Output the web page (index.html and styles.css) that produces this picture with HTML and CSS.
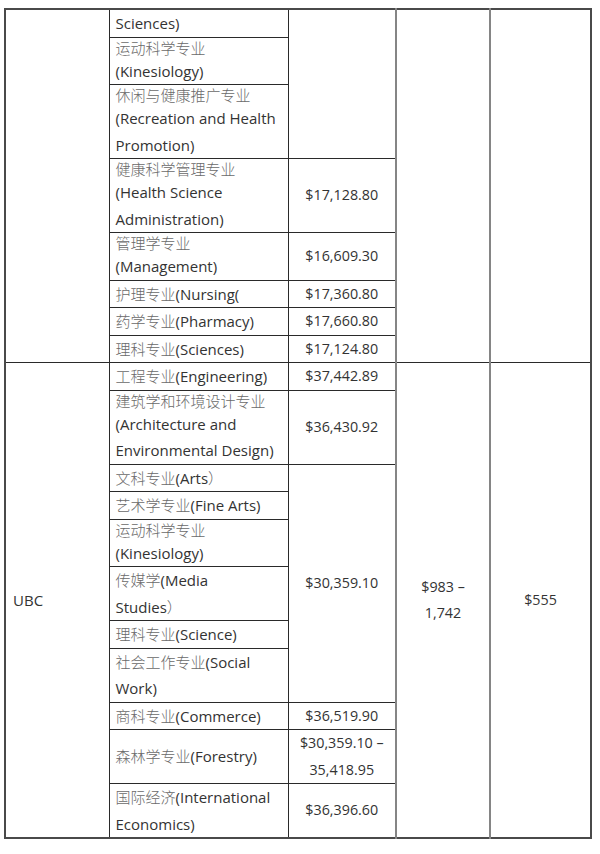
FILE: index.html
```html
<!DOCTYPE html>
<html lang="zh-CN">
<head>
<meta charset="utf-8">
<title>学费表</title>
<link rel="stylesheet" href="styles.css">
</head>
<body>
<table class="fees">
  <colgroup>
    <col class="c-school">
    <col class="c-major">
    <col class="c-tuition">
    <col class="c-fee">
    <col class="c-other">
  </colgroup>
  <tbody>
    <tr>
      <td class="school" rowspan="8"></td>
      <td class="major">Sciences)</td>
      <td class="num" rowspan="3"></td>
      <td class="num gray" rowspan="8"></td>
      <td class="num gray" rowspan="8"></td>
    </tr>
    <tr><td class="major"><span class="zh line">运动科学专业</span>(Kinesiology)</td></tr>
    <tr><td class="major"><span class="zh line">休闲与健康推广专业</span>(Recreation and Health<br>Promotion)</td></tr>
    <tr>
      <td class="major"><span class="zh line">健康科学管理专业</span>(Health Science<br>Administration)</td>
      <td class="num">$17,128.80</td>
    </tr>
    <tr>
      <td class="major"><span class="zh line">管理学专业</span>(Management)</td>
      <td class="num">$16,609.30</td>
    </tr>
    <tr>
      <td class="major"><span class="zh">护理专业</span>(Nursing(</td>
      <td class="num">$17,360.80</td>
    </tr>
    <tr>
      <td class="major"><span class="zh">药学专业</span>(Pharmacy)</td>
      <td class="num">$17,660.80</td>
    </tr>
    <tr>
      <td class="major"><span class="zh">理科专业</span>(Sciences)</td>
      <td class="num">$17,124.80</td>
    </tr>

    <tr>
      <td class="school" rowspan="11">UBC</td>
      <td class="major"><span class="zh">工程专业</span>(Engineering)</td>
      <td class="num">$37,442.89</td>
      <td class="num gray" rowspan="11">$983 –<br>1,742</td>
      <td class="num gray" rowspan="11">$555</td>
    </tr>
    <tr>
      <td class="major"><span class="zh line">建筑学和环境设计专业</span>(Architecture and<br>Environmental Design)</td>
      <td class="num">$36,430.92</td>
    </tr>
    <tr>
      <td class="major"><span class="zh">文科专业</span>(Arts<span class="zh">）</span></td>
      <td class="num" rowspan="6">$30,359.10</td>
    </tr>
    <tr><td class="major"><span class="zh">艺术学专业</span>(Fine Arts)</td></tr>
    <tr><td class="major"><span class="zh line">运动科学专业</span>(Kinesiology)</td></tr>
    <tr><td class="major"><span class="zh">传媒学</span>(Media<br>Studies<span class="zh">）</span></td></tr>
    <tr><td class="major"><span class="zh">理科专业</span>(Science)</td></tr>
    <tr><td class="major"><span class="zh">社会工作专业</span>(Social<br>Work)</td></tr>
    <tr>
      <td class="major"><span class="zh">商科专业</span>(Commerce)</td>
      <td class="num">$36,519.90</td>
    </tr>
    <tr>
      <td class="major"><span class="zh">森林学专业</span>(Forestry)</td>
      <td class="num">$30,359.10 –<br>35,418.95</td>
    </tr>
    <tr>
      <td class="major"><span class="zh">国际经济</span>(International<br>Economics)</td>
      <td class="num">$36,396.60</td>
    </tr>
  </tbody>
</table>
</body>
</html>
```

FILE: styles.css
```css
html, body {
  margin: 0;
  padding: 0;
  background: #ffffff;
}

body {
  font-family: "Open Sans", "Noto Sans CJK SC", sans-serif;
  font-size: 14.3px;
  color: #333333;
}

.fees {
  margin: 8px 0 0 4px;
  width: 588px;
  table-layout: fixed;
  border-collapse: collapse;
  border: 2px solid #4a4a4a;
}

.c-school { width: 104px; }
.c-major { width: 179px; }
.c-tuition { width: 108px; }
.c-fee { width: 94px; }
.c-other { width: 101px; }

.fees td {
  border: 1px solid #2a2a2a;
  padding: 0 6px;
  line-height: 26.5px;
  vertical-align: middle;
}

.fees td.school {
  padding-left: 7px;
  font-size: 15px;
}

.fees td.major {
  text-align: left;
  padding-left: 6px;
  padding-right: 2px;
  font-size: 15px;
}

.fees td.num {
  text-align: center;
  padding: 0 2px;
}

.fees td.gray {
  border-left: 2px solid #858585;
}

.zh {
  font-family: "Noto Sans CJK SC", sans-serif;
  font-size: 15px;
  line-height: 15px;
  color: #6a6a6a;
  font-weight: 300;
}

.zh.line {
  display: block;
  line-height: 20px;
}
```
